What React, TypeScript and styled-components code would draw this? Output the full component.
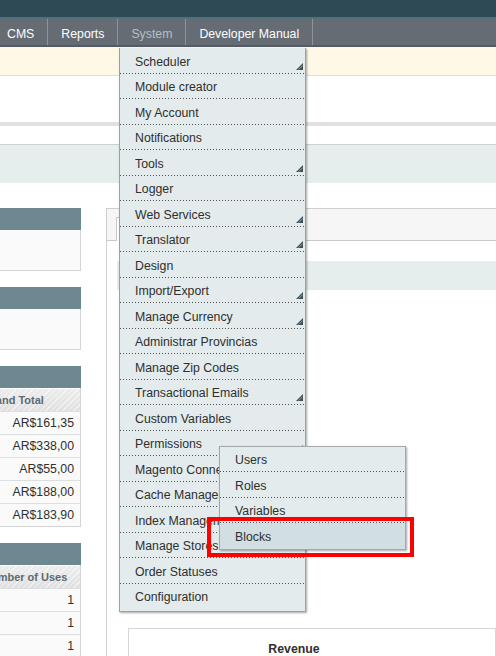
import styled, { createGlobalStyle } from "styled-components";

const GlobalStyle = createGlobalStyle`
  html, body {
    margin: 0;
    padding: 0;
    width: 496px;
    height: 656px;
    overflow: hidden;
    background: #fff;
    font-family: "Liberation Sans", Arial, sans-serif;
  }
`;

const Page = styled.div`
  position: relative;
  width: 496px;
  height: 656px;
  overflow: hidden;
  font-size: 12.3px;
  color: #2f2f2f;
`;

const TopBand = styled.div`
  height: 17px;
  background: #2e4b55;
  border-bottom: 2px solid #52717a;
`;

const Nav = styled.nav`
  display: flex;
  height: 26px;
  background: #656c73;
  border-bottom: 2px solid #545b62;
`;

const NavItem = styled.div<{ $active?: boolean }>`
  display: flex;
  align-items: center;
  padding: 3px 13px 0;
  border-right: 1px solid #8e949a;
  color: ${(p) => (p.$active ? "#b9bfc4" : "#ffffff")};
  font-size: 12.3px;

  &:first-child {
    padding-left: 7px;
  }
`;

const Notice = styled.div`
  height: 28px;
  background: #fff8e7;
  border-bottom: 1px solid #ebdfc3;
`;

const Band = styled.div<{ $h: number; $bg: string; $line?: string }>`
  height: ${(p) => p.$h}px;
  background: ${(p) => p.$bg};
  border-top: ${(p) => (p.$line ? `1px solid ${p.$line}` : "none")};
`;

const Main = styled.div`
  display: flex;
  gap: 25px;
  align-items: flex-start;
  height: 448px;
`;

const LeftCol = styled.div`
  width: 81px;
  flex: none;
  overflow: hidden;
  display: flex;
  flex-direction: column;
  gap: 16px;
`;

const Panel = styled.div`
  width: 201px;
  margin-left: -120px;
`;

const PanelHead = styled.div`
  height: 22px;
  background: #6e8891;
`;

const PanelBody = styled.div`
  height: 40px;
  background: #fafafa;
  border: 1px solid #d4d4d4;
  border-top: none;
`;

const Grid = styled.div`
  background: #fafafa;
  border-right: 1px solid #d4d4d4;
  border-bottom: 1px solid #d4d4d4;
`;

const GridHead = styled.div`
  display: flex;
  justify-content: flex-end;
  height: 22px;
  border-top: 1px solid #fff;
  background: repeating-linear-gradient(
      135deg,
      rgba(255, 255, 255, 0.55) 0 1px,
      transparent 1px 4px
    ),
    linear-gradient(#ececec, #e0e0e0);
  font-weight: bold;
  font-size: 11px;
  color: #5e6a70;
  align-items: center;
`;

const GridRow = styled.div`
  display: flex;
  justify-content: flex-end;
  height: 22px;
  align-items: center;
  border-top: 1px solid #dadfe0;
  font-size: 12.3px;
`;

const Cell = styled.div<{ $right?: boolean }>`
  width: 99px;
  text-align: ${(p) => (p.$right ? "right" : "left")};
  padding: ${(p) => (p.$right ? "0 6px 0 0" : "0 0 0 2px")};
  white-space: nowrap;
  box-sizing: border-box;
`;

const RightCol = styled.div`
  flex: 1;
  align-self: stretch;
  border-left: 1px solid #cfcfcf;
  border-top: 1px solid #cfcfcf;
`;

const TabStrip = styled.div`
  height: 23px;
  padding: 8px 0 0 9px;
  background: #f6f6f6;
  border-bottom: 1px solid #c8c8c8;
  display: flex;
  align-items: flex-end;
`;

const Tab = styled.div`
  width: 160px;
  height: 23px;
  margin-bottom: -1px;
  background: #fff;
  border: 1px solid #c8c8c8;
  border-bottom: none;
`;

const SubBar = styled.div`
  height: 29px;
  margin: 20px 0 0 10px;
  background: #e5eeed;
`;

const ChartBox = styled.div`
  margin: 338px 0 0 21px;
  border: 1px solid #d6d6d6;
  height: 60px;
  display: flex;
`;

const ChartTitle = styled.div`
  width: 330px;
  padding-top: 13px;
  text-align: center;
  font-weight: bold;
  font-size: 12.3px;
  line-height: 15px;
`;

const Dropdown = styled.ul`
  position: absolute;
  left: 119px;
  top: 48px;
  width: 185px;
  margin: 0;
  padding: 0 0 2px;
  list-style: none;
  background: #e3ebed;
  border: 1px solid #99a3a7;
  border-top: none;
  box-shadow: 1px 1px 2px rgba(0, 0, 0, 0.35);
  z-index: 10;
`;

const Item = styled.li<{ $hover?: boolean }>`
  position: relative;
  height: 25.5px;
  box-sizing: border-box;
  padding: 2px 0 0 15px;
  display: flex;
  align-items: center;
  background: ${(p) => (p.$hover ? "#d1dfe3" : "transparent")};
  color: #2f2f2f;
  white-space: nowrap;

  &::after {
    content: "";
    position: absolute;
    left: 0;
    right: 0;
    bottom: 0;
    height: 1px;
    background: repeating-linear-gradient(
      to right,
      #4f4f4f 0 1px,
      transparent 1px 3px
    );
  }

  &:last-child::after {
    display: none;
  }
`;

const Arrow = styled.svg`
  position: absolute;
  right: 2px;
  bottom: 4px;
`;

const Flyout = styled.ul`
  position: absolute;
  left: 99px;
  top: 15px;
  width: 185px;
  margin: 0;
  padding: 0;
  list-style: none;
  background: #e3ebed;
  border: 1px solid #a3a9ac;
  box-shadow: 1px 1px 2px rgba(0, 0, 0, 0.35);
  z-index: 11;
`;

const Highlight = styled.div`
  position: absolute;
  left: 207px;
  top: 517px;
  width: 207px;
  height: 40px;
  box-sizing: border-box;
  border: 4px solid #ff0000;
  z-index: 20;
`;

function SubArrow() {
  return (
    <Arrow width="7" height="7" viewBox="0 0 7 7">
      <path d="M7 0V7H0Z" fill="#3f4f57" />
      <path d="M2.6 6.6L6.6 2.6" stroke="#a3b3b8" strokeWidth="0.8" />
    </Arrow>
  );
}

const menu: { label: string; sub?: boolean }[] = [
  { label: "Scheduler", sub: true },
  { label: "Module creator" },
  { label: "My Account" },
  { label: "Notifications" },
  { label: "Tools", sub: true },
  { label: "Logger" },
  { label: "Web Services", sub: true },
  { label: "Translator", sub: true },
  { label: "Design" },
  { label: "Import/Export", sub: true },
  { label: "Manage Currency", sub: true },
  { label: "Administrar Provincias" },
  { label: "Manage Zip Codes" },
  { label: "Transactional Emails", sub: true },
  { label: "Custom Variables" },
  { label: "Permissions", sub: true },
  { label: "Magento Connect", sub: true },
  { label: "Cache Management" },
  { label: "Index Management" },
  { label: "Manage Stores" },
  { label: "Order Statuses" },
  { label: "Configuration" },
];

const permissions = ["Users", "Roles", "Variables", "Blocks"];

const totals = ["AR$161,35", "AR$338,00", "AR$55,00", "AR$188,00", "AR$183,90"];
const uses = ["1", "1", "1"];

export default function App() {
  return (
    <>
      <GlobalStyle />
      <Page>
        <header>
          <TopBand />
          <Nav>
            <NavItem>CMS</NavItem>
            <NavItem>Reports</NavItem>
            <NavItem $active>System</NavItem>
            <NavItem>Developer Manual</NavItem>
          </Nav>
        </header>
        <Notice />
        <Band $h={46} $bg="#fff" />
        <Band $h={4} $bg="#e1e1e1" />
        <Band $h={18} $bg="#fff" />
        <Band $h={38} $bg="#e5eeed" $line="#cbd1d2" />
        <Band $h={25} $bg="#fff" />
        <Main>
          <LeftCol>
            <Panel>
              <PanelHead />
              <PanelBody />
            </Panel>
            <Panel>
              <PanelHead />
              <PanelBody />
            </Panel>
            <Panel>
              <PanelHead />
              <Grid>
                <GridHead>
                  <Cell>Grand Total</Cell>
                </GridHead>
                {totals.map((t, i) => (
                  <GridRow key={i}>
                    <Cell $right>{t}</Cell>
                  </GridRow>
                ))}
              </Grid>
            </Panel>
            <Panel>
              <PanelHead />
              <Grid>
                <GridHead>
                  <Cell>Number of Uses</Cell>
                </GridHead>
                {uses.map((n, i) => (
                  <GridRow key={i}>
                    <Cell $right>{n}</Cell>
                  </GridRow>
                ))}
              </Grid>
            </Panel>
          </LeftCol>
          <RightCol>
            <TabStrip>
              <Tab />
            </TabStrip>
            <SubBar />
            <ChartBox>
              <ChartTitle>Revenue</ChartTitle>
            </ChartBox>
          </RightCol>
        </Main>

        <Dropdown>
          {menu.map((m) => (
            <Item key={m.label}>
              {m.label}
              {m.sub && <SubArrow />}
              {m.label === "Permissions" && (
                <Flyout>
                  {permissions.map((p) => (
                    <Item key={p} $hover={p === "Blocks"}>
                      {p}
                    </Item>
                  ))}
                </Flyout>
              )}
            </Item>
          ))}
        </Dropdown>
        <Highlight />
      </Page>
    </>
  );
}
